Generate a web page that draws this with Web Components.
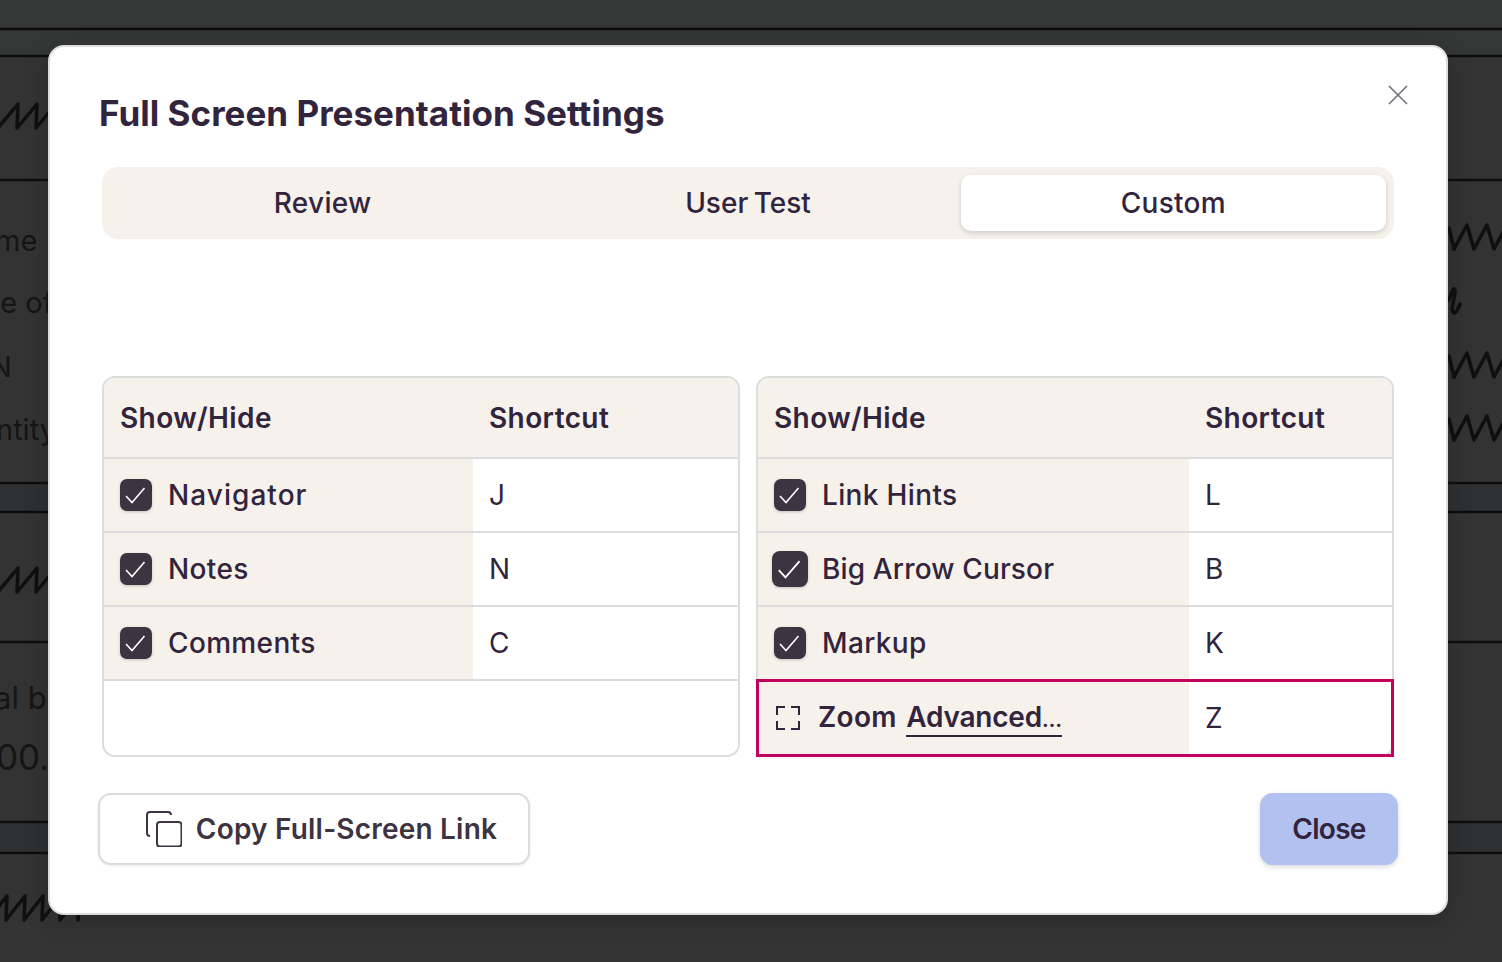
<!DOCTYPE html>
<html lang="en">
<head>
<meta charset="utf-8">
<title>Full Screen Presentation Settings</title>
<style>
  html, body { margin: 0; height: 100%; background: #333; overflow: hidden; }
  body { font-family: Inter, "Liberation Sans", sans-serif; color: #32243c; }
  u { letter-spacing: -0.2px; }
  .dots { font-size: 20px; font-weight: 700; letter-spacing: 0; }
</style>
</head>
<body>
<dimmed-document></dimmed-document>
<settings-modal heading="Full Screen Presentation Settings">
  <segment-tabs slot="tabs" active="2">
    <button-tab>Review</button-tab>
    <button-tab style="letter-spacing: 0; word-spacing: -2px">User Test</button-tab>
    <button-tab>Custom</button-tab>
  </segment-tabs>
  <shortcut-table slot="left" first="369px">
    <shortcut-row checked key="J" style="letter-spacing: 1.05px">Navigator</shortcut-row>
    <shortcut-row checked key="N">Notes</shortcut-row>
    <shortcut-row checked key="C">Comments</shortcut-row>
    <shortcut-row blank></shortcut-row>
  </shortcut-table>
  <shortcut-table slot="right" first="431px">
    <shortcut-row checked key="L">Link Hints</shortcut-row>
    <shortcut-row checked big key="B" style="letter-spacing: 0.15px">Big Arrow Cursor</shortcut-row>
    <shortcut-row checked key="K">Markup</shortcut-row>
    <shortcut-row focused key="Z">Zoom <u>Advanced<span class="dots">…</span></u></shortcut-row>
  </shortcut-table>
</settings-modal>

<script>
/**
 * The blurred document behind the dialog. Drawn on a free canvas.
 */
class DimmedDocument extends HTMLElement {
  constructor () {
    super()
    // Handwriting as a zigzag: lean is how far right of the trough the peak sits.
    const squiggle = (x, y, n, step, lean) => {
      let d = `M${x} ${y + 12}`
      for (let i = 0; i < n; i++) {
        const tx = x + i * step
        d += ` L${tx + lean} ${y - 12} L${tx + step} ${y + 12}`
      }
      return `<path d="${d}"/>`
    }
    this.attachShadow({ mode: 'open' }).innerHTML = `
      <style>
        :host { position: absolute; inset: 0; display: block; background: #333; }
        svg { display: block; width: 100%; height: 100%; }
        .lines line { stroke: #0d0d0d; stroke-width: 2.5; }
        .ink path { fill: none; stroke: #0f0f0f; stroke-width: 3.5; stroke-linecap: round; stroke-linejoin: round; }
        text { font: 29px Inter, sans-serif; fill: #151515; }
      </style>
      <svg viewBox="0 0 1502 962">
        <rect width="1502" height="56" fill="#353737"/>
        <rect y="484" width="1502" height="28" fill="#2e3032"/>
        <rect y="822" width="1502" height="31" fill="#2e3032"/>
        <g class="lines">
          <line x1="0" y1="29" x2="1502" y2="29"/>
          <line x1="0" y1="56" x2="1502" y2="56"/>
          <line x1="0" y1="180" x2="1502" y2="180"/>
          <line x1="0" y1="483" x2="1502" y2="483"/>
          <line x1="0" y1="512" x2="1502" y2="512"/>
          <line x1="0" y1="642" x2="1502" y2="642"/>
          <line x1="0" y1="822" x2="1502" y2="822"/>
          <line x1="0" y1="853" x2="1502" y2="853"/>
        </g>
        <g class="ink">
          ${squiggle(-2, 116, 3, 19, 20)}
          ${squiggle(-2, 580, 3, 19, 20)}
          ${squiggle(-12, 908, 5, 18, 19)}
          ${squiggle(1454, 237, 3, 20, 13)}
          ${squiggle(1454, 365, 3, 20, 13)}
          ${squiggle(1454, 428, 3, 20, 13)}
          <path d="M1449 228 L1454 249"/>
          <path d="M1449 356 L1454 377"/>
          <path d="M1449 419 L1454 440"/>
          <path d="M1449 300 Q1455 282 1455 293 L1452 309 Q1454 319 1460 304"/>
        </g>
        <text x="-5" y="251">me</text>
        <text x="-9" y="313">te of</text>
        <text x="-10" y="377">N</text>
        <text x="-4" y="440">ntity</text>
        <text x="-6" y="709" style="font-size:31px">al bo</text>
        <text x="-4" y="770" style="font-size:35px">00.0</text>
      </svg>
    `
  }
}
customElements.define('dimmed-document', DimmedDocument)

const modalTemplate = document.createElement('template')
modalTemplate.innerHTML = `
  <style>
    :host {
      position: relative;
      display: flex;
      flex-direction: column;
      box-sizing: border-box;
      width: 1400px;
      height: 870px;
      margin: 45px 0 0 48px;
      padding: 0 52px;
      background: #fff;
      border: 2px solid #dcdcdc;
      border-radius: 16px;
      box-shadow: 0 4px 24px rgba(0, 0, 0, .2);
    }
    h1 {
      margin: 0 0 0 -3px;
      height: 120px;
      line-height: 132px;
      font-size: 35px;
      font-weight: 700;
      letter-spacing: 0.03px;
      white-space: nowrap;
    }
    .close {
      position: absolute;
      top: 38px;
      right: 38px;
      width: 20px;
      height: 20px;
    }
    .tables {
      display: grid;
      grid-template-columns: 1fr 1fr;
      gap: 16px;
      margin-top: 137px;
    }
    footer {
      display: flex;
      justify-content: space-between;
      margin: 36px -4px 0;
    }
    .btn {
      box-sizing: border-box;
      display: flex;
      align-items: center;
      justify-content: center;
      height: 72px;
      border-radius: 13px;
      font-size: 28px;
      font-weight: 600;
      white-space: nowrap;
    }
    .copy {
      width: 432px;
      gap: 14px;
      padding-left: 15px;
      color: #3d3341;
      background: #fff;
      border: 2px solid #dcdcdc;
      box-shadow: 0 1px 3px rgba(0, 0, 0, .08);
      letter-spacing: 0.2px;
    }
    .done {
      width: 138px;
      background: #b2c1f0;
      box-shadow: 0 2px 5px rgba(0, 0, 0, .15);
      letter-spacing: -0.7px;
    }
  </style>
  <h1></h1>
  <svg class="close" viewBox="0 0 20 20" fill="none" stroke="#756c7c" stroke-width="1.6">
    <path d="M1 1 19 19M19 1 1 19"/>
  </svg>
  <slot name="tabs"></slot>
  <div class="tables">
    <slot name="left"></slot>
    <slot name="right"></slot>
  </div>
  <footer>
    <div class="btn copy">
      <svg width="36" height="36" viewBox="0 0 36 36" fill="none" stroke="#3d3341" stroke-width="2">
        <path d="M25 4V3.5A3 3 0 0 0 22 1H4A3 3 0 0 0 1 4V22A3 3 0 0 0 4 25"/>
        <rect x="11" y="11" width="24.5" height="24.5" rx="3"/>
      </svg>
      <span>Copy Full-Screen Link</span>
    </div>
    <div class="btn done">Close</div>
  </footer>
`

/**
 * The dialog with title, tabs, two tables and the footer.
 */
class SettingsModal extends HTMLElement {
  constructor () {
    super()
    this.attachShadow({ mode: 'open' }).appendChild(modalTemplate.content.cloneNode(true))
    this.shadowRoot.querySelector('h1').textContent = this.getAttribute('heading')
  }
}
customElements.define('settings-modal', SettingsModal)

class SegmentTabs extends HTMLElement {
  constructor () {
    super()
    this.attachShadow({ mode: 'open' }).innerHTML = `
      <style>
        :host {
          display: grid;
          grid-template-columns: repeat(3, 1fr);
          box-sizing: border-box;
          height: 72px;
          padding: 8px;
          background: #f6f1eb;
          border-radius: 16px;
        }
      </style>
      <slot></slot>
    `
  }

  connectedCallback () {
    const i = Number(this.getAttribute('active'))
    this.querySelectorAll('button-tab')[i]?.setAttribute('active', '')
  }
}
customElements.define('segment-tabs', SegmentTabs)

class ButtonTab extends HTMLElement {
  constructor () {
    super()
    this.attachShadow({ mode: 'open' }).innerHTML = `
      <style>
        :host {
          display: flex;
          align-items: center;
          justify-content: center;
          border-radius: 10px;
          font-size: 28px;
          font-weight: 500;
          letter-spacing: 0.3px;
        }
        :host([active]) {
          background: #fff;
          box-shadow: 0 2px 5px rgba(0, 0, 0, .16);
        }
      </style>
      <slot></slot>
    `
  }
}
customElements.define('button-tab', ButtonTab)

class ShortcutTable extends HTMLElement {
  constructor () {
    super()
    const first = this.getAttribute('first')
    this.attachShadow({ mode: 'open' }).innerHTML = `
      <style>
        :host {
          display: block;
          box-sizing: border-box;
          height: 381px;
          border: 2px solid #dcdcdc;
          border-radius: 13px;
          --first: ${first};
        }
        header {
          display: grid;
          grid-template-columns: var(--first) 1fr;
          box-sizing: border-box;
          height: 81px;
          align-items: center;
          background: #f6f1eb;
          border-bottom: 2px solid #dcdcdc;
          border-radius: 11px 11px 0 0;
          font-size: 28px;
          font-weight: 600;
          letter-spacing: 0.4px;
        }
        span { padding-left: 16px; }
      </style>
      <header><span>Show/Hide</span><span>Shortcut</span></header>
      <slot></slot>
    `
  }
}
customElements.define('shortcut-table', ShortcutTable)

class ShortcutRow extends HTMLElement {
  constructor () {
    super()
    const key = this.getAttribute('key') || ''
    const blank = this.hasAttribute('blank')
    const mark = this.hasAttribute('checked')
      ? `<span class="box"><svg viewBox="0 0 32 32" fill="none" stroke="#fff" stroke-width="1.6"><path d="M6 17 12 23.5 24.5 9"/></svg></span>`
      : `<svg class="frame" width="24" height="24" viewBox="0 0 24 24" fill="none" stroke="#32243c" stroke-width="2"><path d="M1 9V1H9M15 1H23V9M23 15V23H15M9 23H1V15"/></svg>`
    this.attachShadow({ mode: 'open' }).innerHTML = `
      <style>
        :host {
          position: relative;
          display: grid;
          grid-template-columns: var(--first) 1fr;
          box-sizing: border-box;
          height: 74px;
          border-bottom: 2px solid #dcdcdc;
          font-size: 28px;
          font-weight: 450;
          letter-spacing: 0.35px;
        }
        :host([blank]) { border-bottom: 0; }
        :host([focused]) {
          height: 74px;
          border-bottom: 0;
          outline: 3px solid #c2005d;
          outline-offset: -1px;
          box-shadow: 0 2px 4px rgba(0, 0, 0, .1);
          font-weight: 600;
          letter-spacing: 0.3px;
        }
        .name {
          display: flex;
          align-items: center;
          gap: 16px;
          padding-left: 16px;
          background: #f6f1eb;
          white-space: nowrap;
        }
        :host([big]) .name { padding-left: 14px; gap: 14px; }
        :host([focused]) .name { padding-left: 18px; gap: 18px; }
        .text { position: relative; }
        :host([focused]) .text { word-spacing: 2px; top: -1px; }
        .key {
          display: flex;
          align-items: center;
          padding-left: 16px;
          font-weight: 400;
        }
        .box {
          flex: none;
          width: 32px;
          height: 32px;
          background: #3d3341;
          border-radius: 7px;
          box-shadow: 0 1px 3px rgba(0, 0, 0, .2);
        }
        :host([big]) .box { width: 36px; height: 36px; border-radius: 8px; }
        .box svg { display: block; width: 100%; height: 100%; }
        ::slotted(u) {
          text-decoration: none;
          border-bottom: 2px solid #32243c;
          padding-bottom: 1px;
        }
      </style>
      ${blank ? '' : `<div class="name">${mark}<span class="text"><slot></slot></span></div><div class="key">${key}</div>`}
    `
  }
}
customElements.define('shortcut-row', ShortcutRow)
</script>
</body>
</html>
